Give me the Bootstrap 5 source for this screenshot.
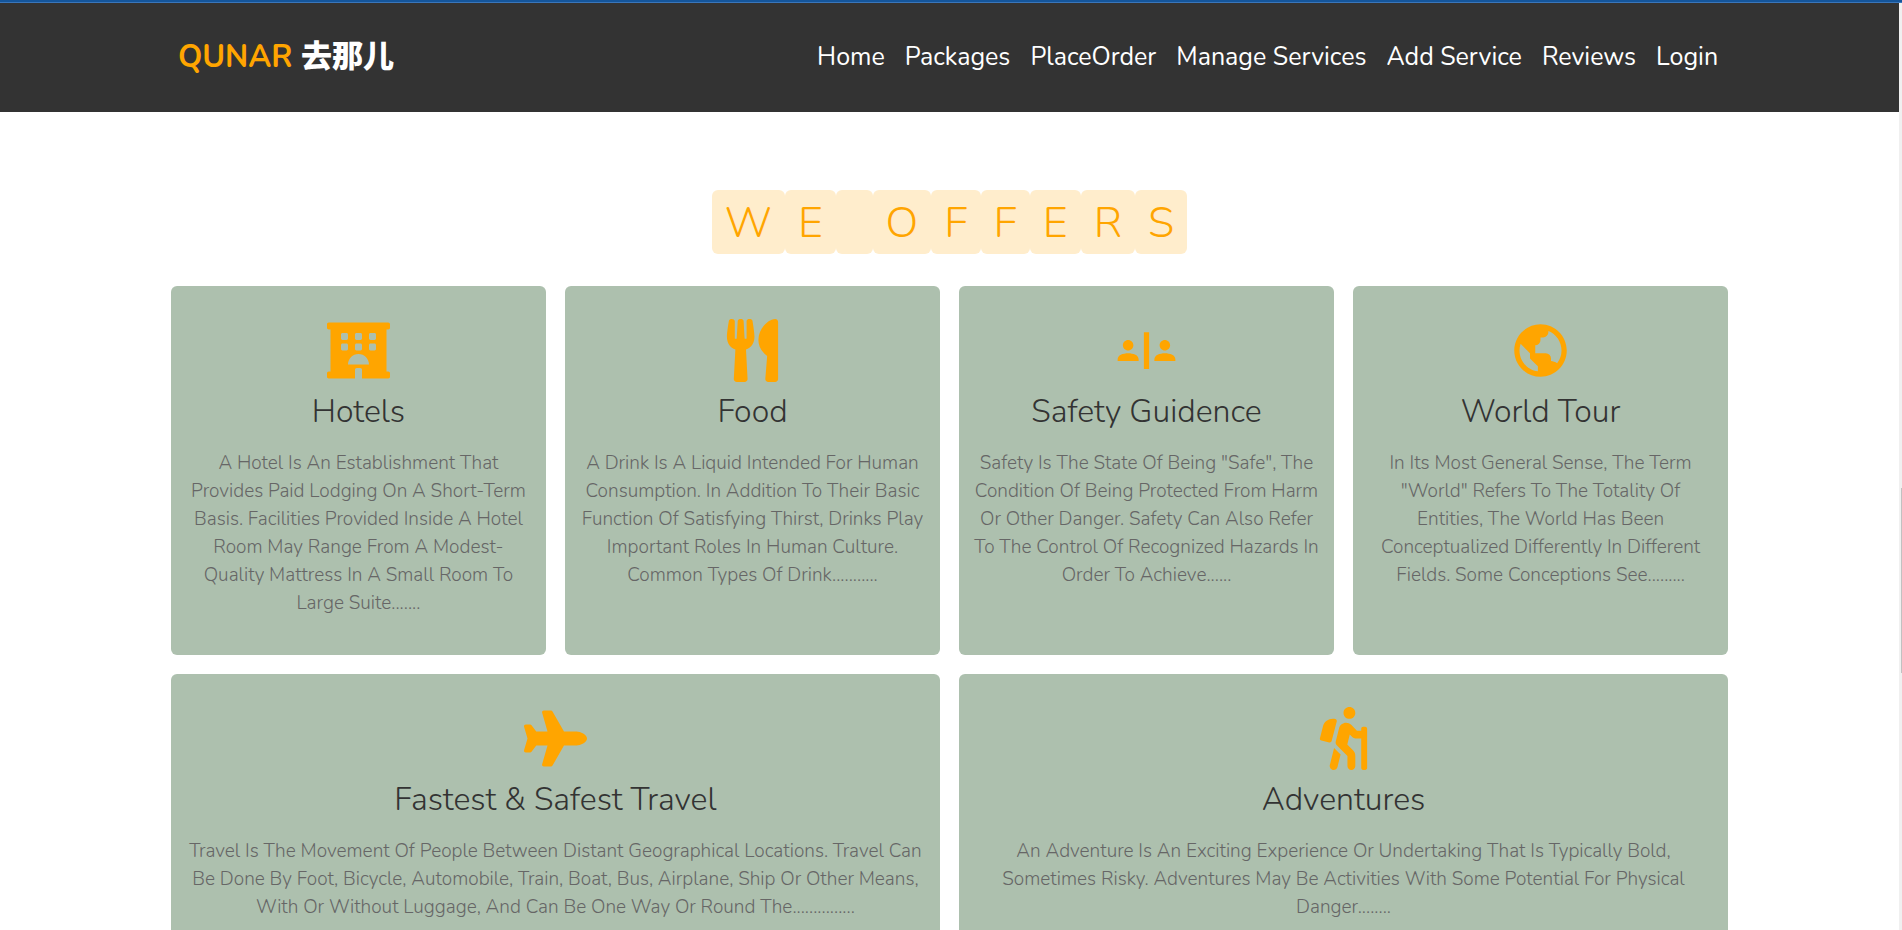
<!DOCTYPE html>
<html lang="en">
<head>
<meta charset="utf-8">
<meta name="viewport" content="width=device-width, initial-scale=1">
<title>Qunar</title>
<link href="https://cdn.jsdelivr.net/npm/bootstrap@5.3.0/dist/css/bootstrap.min.css" rel="stylesheet">
<script src="https://cdn.jsdelivr.net/npm/bootstrap@5.3.0/dist/js/bootstrap.bundle.min.js" defer></script>
<style>
  body { font-family: Nunito, Lato, sans-serif; height: 100vh; overflow: hidden; background: #fff; }
  .top-strip { height: 3px; background: #14559b; border-bottom: 1px solid #3a76ba; }
  .page { margin-right: 3px; }
  .site-header { background: #333; min-height: 109px; padding: 0 calc(9% + 7px) 2px; }
  .brand { font-size: 31px; font-weight: 700; line-height: 44px; color: #ffa500; font-family: Nunito, Lato, "Noto Sans CJK SC", sans-serif; }
  .brand span { color: #fff; font-weight: 900; }
  .site-nav { gap: 20px; padding-right: 3px; }
  .site-nav a { color: #fff; font-size: 25px; line-height: 36px; }
  .offers { padding: 78px 9% 32px; }
  .heading { margin-bottom: 32px; font-size: 43px; font-weight: 300; line-height: 60px; color: #ffa500; }
  .heading span { background: #ffedcc; border-radius: 6px; padding: 3px 13px 1px; white-space: pre; }
  .offer-row { --bs-gutter-x: 19px; --bs-gutter-y: 19px; }
  .offer { background: #adc0ae; border-radius: 6px; padding: 33px 13px 38px; }
  .offer svg { width: 63px; height: 63px; fill: #ffa500; margin-bottom: 10px; }
  .offer h3 { font-size: 32px; font-weight: 300; line-height: 40px; color: #333; margin-bottom: 17px; }
  .offer p { font-size: 19px; font-weight: 300; line-height: 28px; color: #666; margin: 0; }
  .scroll-track { top: 3px; width: 3px; background: #f0f0f0; }
  .scroll-thumb { width: 1px; height: 20%; background: #c1c1c1; margin-top: 485px; }
</style>
</head>
<body>
<div class="top-strip"></div>
<div class="page">
  <header class="site-header d-flex align-items-center justify-content-between">
    <a class="brand text-decoration-none" href="#">QUNAR <span lang="zh">去那儿</span></a>
    <nav class="site-nav d-flex flex-wrap">
      <a class="text-decoration-none" href="#">Home</a>
      <a class="text-decoration-none" href="#">Packages</a>
      <a class="text-decoration-none" href="#">PlaceOrder</a>
      <a class="text-decoration-none" href="#">Manage Services</a>
      <a class="text-decoration-none" href="#">Add Service</a>
      <a class="text-decoration-none" href="#">Reviews</a>
      <a class="text-decoration-none" href="#">Login</a>
    </nav>
  </header>
  <main class="offers">
    <h1 class="heading d-flex justify-content-center"><span>W</span><span>E</span><span> </span><span>O</span><span>F</span><span>F</span><span>E</span><span>R</span><span>S</span></h1>
    <div class="row offer-row">
      <div class="col-12 col-md-6 col-xl-3">
        <section class="offer h-100 d-flex flex-column align-items-center text-center">
          <svg viewBox="0 0 576 512" aria-hidden="true"><path d="M560 64c8.84 0 16-7.16 16-16V16c0-8.84-7.16-16-16-16H16C7.16 0 0 7.16 0 16v32c0 8.84 7.16 16 16 16h15.98v384H16c-8.84 0-16 7.16-16 16v32c0 8.84 7.16 16 16 16h240v-80c0-8.8 7.2-16 16-16h32c8.8 0 16 7.2 16 16v80h240c8.84 0 16-7.16 16-16v-32c0-8.84-7.16-16-16-16h-16V64h16zm-304 44.8c0-6.4 6.4-12.8 12.8-12.8h38.4c6.4 0 12.8 6.4 12.8 12.8v38.4c0 6.4-6.4 12.8-12.8 12.8h-38.4c-6.4 0-12.8-6.4-12.8-12.8v-38.4zm0 96c0-6.4 6.4-12.8 12.8-12.8h38.4c6.4 0 12.8 6.4 12.8 12.8v38.4c0 6.4-6.4 12.8-12.8 12.8h-38.4c-6.4 0-12.8-6.4-12.8-12.8v-38.4zm-128-96c0-6.4 6.4-12.8 12.8-12.8h38.4c6.4 0 12.8 6.4 12.8 12.8v38.4c0 6.4-6.4 12.8-12.8 12.8h-38.4c-6.4 0-12.8-6.4-12.8-12.8v-38.4zM179.2 256h-38.4c-6.4 0-12.8-6.4-12.8-12.8v-38.4c0-6.4 6.4-12.8 12.8-12.8h38.4c6.4 0 12.8 6.4 12.8 12.8v38.4c0 6.4-6.4 12.8-12.8 12.8zM192 384c0-53.02 42.98-96 96-96s96 42.98 96 96H192zm256-140.8c0 6.4-6.4 12.8-12.8 12.8h-38.4c-6.4 0-12.8-6.4-12.8-12.8v-38.4c0-6.4 6.4-12.8 12.8-12.8h38.4c6.4 0 12.8 6.4 12.8 12.8v38.4zm0-96c0 6.4-6.4 12.8-12.8 12.8h-38.4c-6.4 0-12.8-6.4-12.8-12.8v-38.4c0-6.4 6.4-12.8 12.8-12.8h38.4c6.4 0 12.8 6.4 12.8 12.8v38.4z"/></svg>
          <h3>Hotels</h3>
          <p>A Hotel Is An Establishment That Provides Paid Lodging On A Short-Term Basis. Facilities Provided Inside A Hotel Room May Range From A Modest-Quality Mattress In A Small Room To Large Suite.......</p>
        </section>
      </div>
      <div class="col-12 col-md-6 col-xl-3">
        <section class="offer h-100 d-flex flex-column align-items-center text-center">
          <svg viewBox="0 0 416 512" aria-hidden="true"><path d="M207.9 15.2c.8 4.7 16.1 94.5 16.1 128.8 0 52.3-27.8 89.6-68.9 104.6L168 486.7c.7 13.7-10.2 25.3-24 25.3H80c-13.7 0-24.7-11.5-24-25.3l12.9-238.1C27.7 233.6 0 196.2 0 144 0 109.6 15.3 19.9 16.1 15.2 19.3-5.1 61.4-5.4 64 16.3v141.2c1.3 3.4 15.1 3.2 16 0 1.4-25.3 7.9-139.2 8-141.8 3.3-20.8 44.7-20.8 47.9 0 .2 2.7 6.6 116.5 8 141.8.9 3.2 14.8 3.4 16 0V16.3c2.6-21.6 44.8-21.4 48-1.1zm119.2 285.7l-15 185.1c-1.2 14 9.9 26 23.9 26h56c13.3 0 24-10.7 24-24V24c0-13.2-10.7-24-24-24-82.5 0-221.4 178.5-64.9 300.9z"/></svg>
          <h3>Food</h3>
          <p>A Drink Is A Liquid Intended For Human Consumption. In Addition To Their Basic Function Of Satisfying Thirst, Drinks Play Important Roles In Human Culture. Common Types Of Drink...........</p>
        </section>
      </div>
      <div class="col-12 col-md-6 col-xl-3">
        <section class="offer h-100 d-flex flex-column align-items-center text-center">
          <svg viewBox="0 0 24 24" aria-hidden="true"><path d="M11 5h2v14h-2zM5 12c1.1 0 2-.9 2-2s-.9-2-2-2-2 .9-2 2 .9 2 2 2zM7.78 13.58C6.93 13.21 5.99 13 5 13s-1.93.21-2.78.58C1.48 13.9 1 14.62 1 15.43V16h8v-.57c0-.81-.48-1.53-1.22-1.85zM19 12c1.1 0 2-.9 2-2s-.9-2-2-2-2 .9-2 2 .9 2 2 2zM21.78 13.58C20.93 13.21 19.99 13 19 13s-1.93.21-2.78.58c-.74.32-1.22 1.04-1.22 1.85V16h8v-.57c0-.81-.48-1.53-1.22-1.85z"/></svg>
          <h3>Safety Guidence</h3>
          <p>Safety Is The State Of Being "Safe", The Condition Of Being Protected From Harm Or Other Danger. Safety Can Also Refer To The Control Of Recognized Hazards In Order To Achieve......</p>
        </section>
      </div>
      <div class="col-12 col-md-6 col-xl-3">
        <section class="offer h-100 d-flex flex-column align-items-center text-center">
          <svg viewBox="0 0 24 24" aria-hidden="true"><path d="M12 2C6.486 2 2 6.486 2 12s4.486 10 10 10 10-4.486 10-10S17.514 2 12 2zM4 12c0-.899.156-1.762.431-2.569L6 11l2 2v2l2 2 1 1v1.931C7.061 19.436 4 16.072 4 12zm14.33 4.873C17.677 16.347 16.687 16 16 16v-1a2 2 0 0 0-2-2h-4v-3a2 2 0 0 0 2-2V7h1a2 2 0 0 0 2-2v-.411C17.928 5.778 20 8.65 20 12a7.947 7.947 0 0 1-1.67 4.873z"/></svg>
          <h3>World Tour</h3>
          <p>In Its Most General Sense, The Term "World" Refers To The Totality Of Entities, The World Has Been Conceptualized Differently In Different Fields. Some Conceptions See.........</p>
        </section>
      </div>
      <div class="col-12 col-md-6">
        <section class="offer h-100 d-flex flex-column align-items-center text-center">
          <svg viewBox="0 0 576 512" aria-hidden="true"><path d="M480 192H365.71L260.61 8.06A16.014 16.014 0 0 0 246.71 0h-65.5c-10.63 0-18.3 10.17-15.38 20.39L214.86 192H112l-43.2-57.6c-3.02-4.03-7.77-6.4-12.8-6.4H16.01C5.6 128-2.04 137.78.49 147.88L32 256 .49 364.12C-2.04 374.22 5.6 384 16.01 384H56c5.04 0 9.78-2.37 12.8-6.4L112 320h102.86l-49.03 171.6c-2.92 10.22 4.75 20.4 15.38 20.4h65.5c5.74 0 11.04-3.08 13.89-8.06L365.71 320H480c35.35 0 96-28.65 96-64s-60.65-64-96-64z"/></svg>
          <h3>Fastest &amp; Safest Travel</h3>
          <p>Travel Is The Movement Of People Between Distant Geographical Locations. Travel Can Be Done By Foot, Bicycle, Automobile, Train, Boat, Bus, Airplane, Ship Or Other Means, With Or Without Luggage, And Can Be One Way Or Round The...............</p>
        </section>
      </div>
      <div class="col-12 col-md-6">
        <section class="offer h-100 d-flex flex-column align-items-center text-center">
          <svg viewBox="0 0 384 512" aria-hidden="true"><path d="M80.95 472.23c-4.28 17.16 6.14 34.53 23.28 38.81 2.61.66 5.22.96 7.8.96 14.33 0 27.37-9.7 31.02-24.23l25.24-100.97-52.78-52.78-34.56 138.21zm14.89-196.12L137 117c2.19-8.42-3.14-16.95-11.92-19.06-43.88-10.52-88.35 15.07-99.32 57.17L.49 253.24c-2.19 8.42 3.14 16.95 11.92 19.06l63.56 15.25c8.79 2.1 17.68-3.02 19.87-11.44zM368 160h-16c-8.84 0-16 7.16-16 16v16h-34.75l-46.78-46.78C243.38 134.11 228.61 128 212.91 128c-27.02 0-50.47 18.3-57.03 44.52l-26.92 107.72a32.012 32.012 0 0 0 8.42 30.39L224 397.25V480c0 17.67 14.33 32 32 32s32-14.33 32-32v-82.75c0-17.09-6.66-33.16-18.75-45.25l-46.82-46.82c.15-.5.49-.89.62-1.41l19.89-79.57 22.43 22.43c6 6 14.14 9.38 22.62 9.38h48v240c0 8.84 7.16 16 16 16h16c8.84 0 16-7.16 16-16V176c.01-8.84-7.15-16-15.99-16zM240 96c26.51 0 48-21.49 48-48S266.51 0 240 0s-48 21.49-48 48 21.49 48 48 48z"/></svg>
          <h3>Adventures</h3>
          <p>An Adventure Is An Exciting Experience Or Undertaking That Is Typically Bold, Sometimes Risky. Adventures May Be Activities With Some Potential For Physical Danger........</p>
        </section>
      </div>
    </div>
  </main>
</div>
<div class="scroll-track position-fixed end-0 bottom-0 d-flex justify-content-end" aria-hidden="true"><div class="scroll-thumb"></div></div>
</body>
</html>
